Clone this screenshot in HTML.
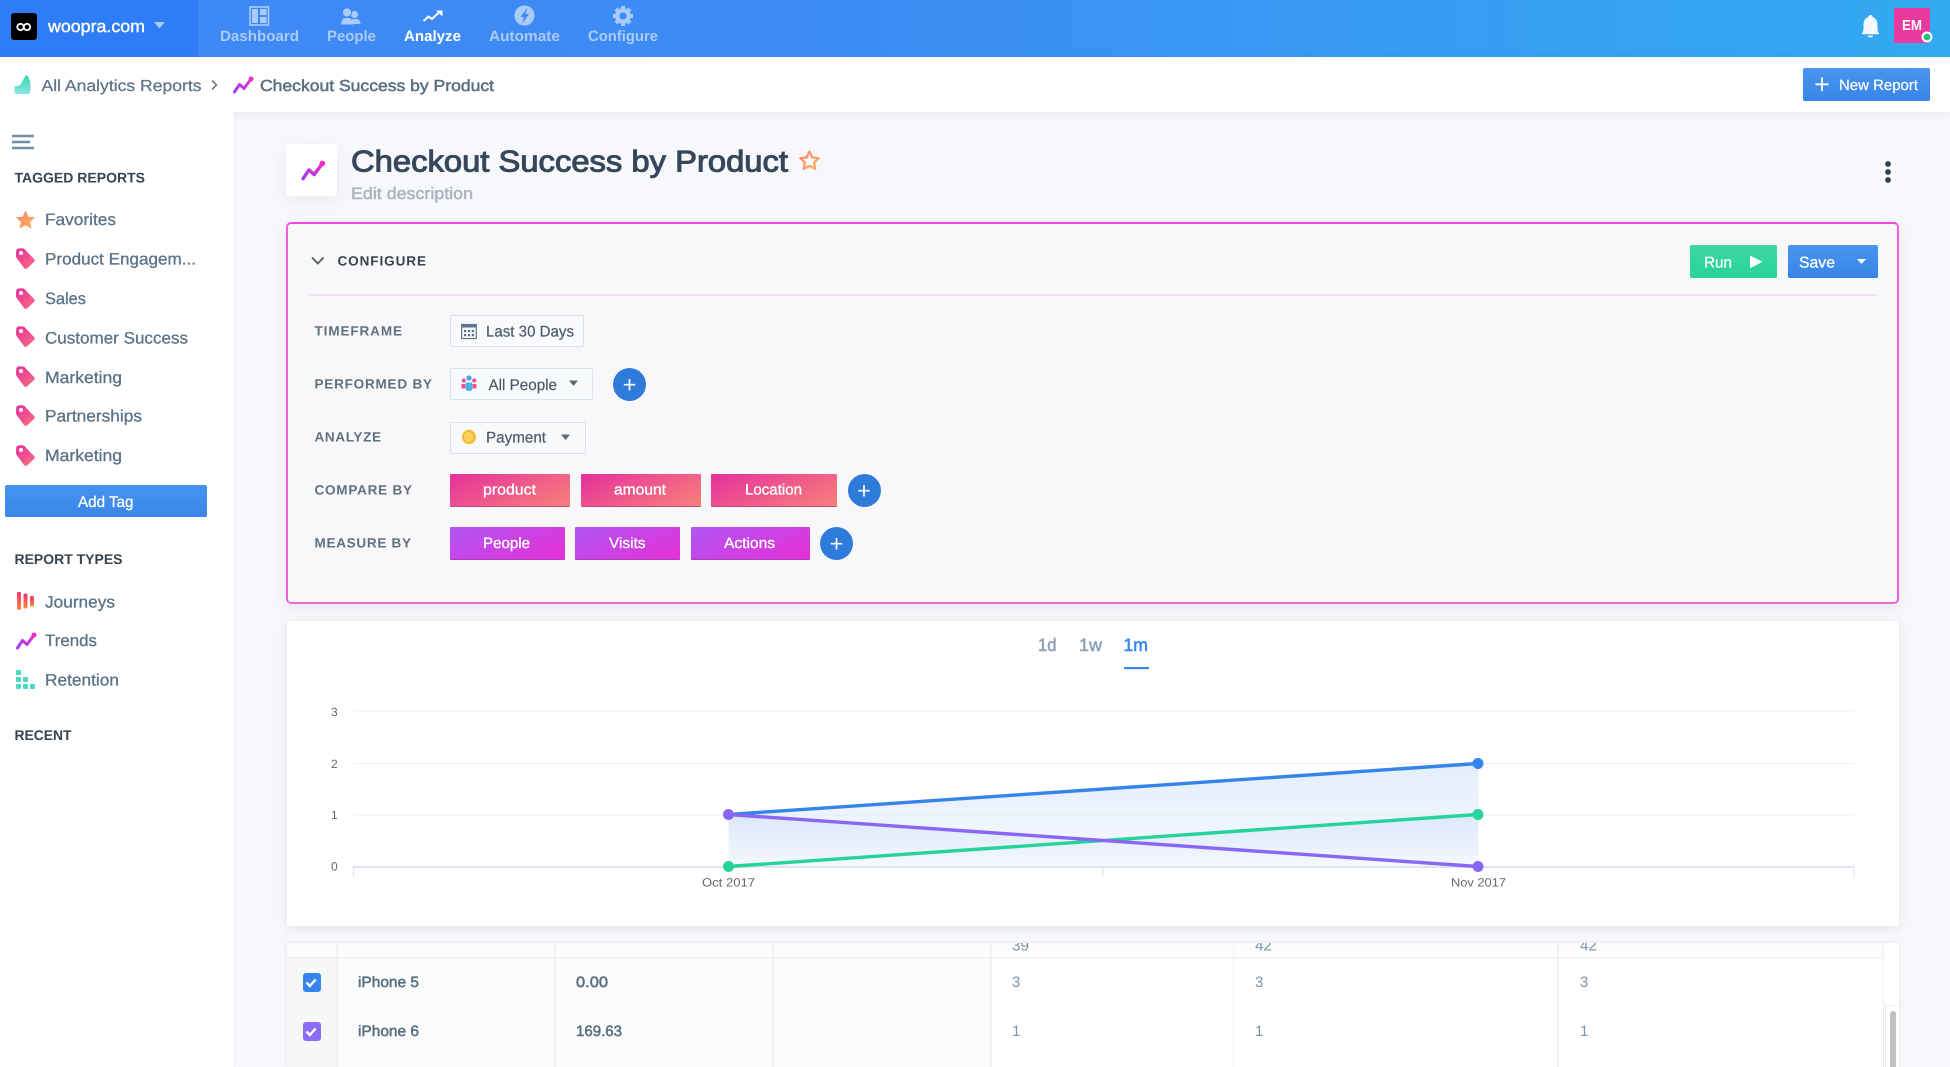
<!DOCTYPE html>
<html lang="en">
<head>
<meta charset="utf-8">
<title>Checkout Success by Product</title>
<style>
html,body{margin:0;padding:0;width:1950px;height:1067px;overflow:hidden;background:#f7f8fb;font-family:"Liberation Sans",sans-serif}
#page{position:absolute;left:0;top:0;width:1950px;height:1067px;overflow:hidden;background:#f7f8fb;filter:blur(.35px)}
.b{position:absolute;box-sizing:border-box}
svg{position:absolute;left:0;top:0}
text{font-family:"Liberation Sans",sans-serif;text-rendering:geometricPrecision}
.sb{stroke:currentColor;stroke-width:.35px}
.nav{font-size:15px;font-weight:700;fill:#a9cbf8}
.side{font-size:16.5px;fill:#5a7288;stroke:#5a7288;stroke-width:.3px}
.head{font-size:14px;font-weight:700;fill:#36434f}
.lab{font-size:13.5px;font-weight:700;fill:#5f7080}
.sel{font-size:15.5px;fill:#4a5a68;stroke:#4a5a68;stroke-width:.2px}
.chip{font-size:15px;fill:#fff;stroke:#fff;stroke-width:.3px}
.num{font-size:15px;fill:#7b93a9}
.row{font-size:15px;fill:#5a6f82;stroke:#5a6f82;stroke-width:.55px}
.axis{font-size:12px;fill:#666}
</style>
</head>
<body>
<div id="page">
<!-- top bar -->
<div class="b" style="left:0;top:0;width:1950px;height:57px;background:linear-gradient(90deg,#3f87f5 0%,#3d8cf5 40%,#32aaf1 100%)"></div>
<div class="b" style="left:0;top:0;width:198px;height:57px;background:#2f7df6"></div>
<div class="b" style="left:11px;top:13px;width:26px;height:27px;background:#000;border-radius:3px"></div>
<div class="b" style="left:1894px;top:8px;width:36px;height:35px;background:#e83a9f;border-radius:2px"></div>
<!-- breadcrumb -->
<div class="b" style="left:0;top:57px;width:1950px;height:55px;background:#fff;box-shadow:0 2px 8px rgba(60,75,100,.09)"></div>
<div class="b" style="left:1803px;top:68px;width:127px;height:33px;border-radius:2px;background:linear-gradient(180deg,#4a95ee,#3785e9)"></div>
<!-- sidebar -->
<div class="b" style="left:0;top:112px;width:234px;height:955px;background:#fff;box-shadow:1px 0 3px rgba(60,75,100,.04)"></div>
<div class="b" style="left:5px;top:485px;width:202px;height:32px;border-radius:2px;background:linear-gradient(180deg,#4693ee,#3a86ea)"></div>
<!-- title icon -->
<div class="b" style="left:286px;top:144px;width:51px;height:52px;background:#fff;border-radius:3px;box-shadow:0 5px 14px rgba(60,75,100,.08)"></div>
<!-- configure card -->
<div class="b" style="left:286px;top:222px;width:1613px;height:382px;background:#f8f8fb;border:2px solid;border-color:#f545de #f05ee0 #e96bd8 #f05ee0;border-radius:5px;box-shadow:0 5px 14px rgba(60,75,100,.08)"></div>
<div class="b" style="left:309px;top:294px;width:1568px;height:1.5px;background:#f8dff5"></div>
<div class="b" style="left:450px;top:315px;width:134px;height:32px;background:#f9fafc;border:1.5px solid #dbe2ea;border-radius:2px"></div>
<div class="b" style="left:450px;top:368px;width:143px;height:32px;background:#f9fafc;border:1.5px solid #dbe2ea;border-radius:2px"></div>
<div class="b" style="left:450px;top:421.5px;width:136px;height:32px;background:#f9fafc;border:1.5px solid #dbe2ea;border-radius:2px"></div>
<div class="b" style="left:613px;top:368px;width:33px;height:33px;border-radius:50%;background:#2f7bdb"></div>
<div class="b" style="left:847.5px;top:474px;width:33px;height:33px;border-radius:50%;background:#2f7bdb"></div>
<div class="b" style="left:820px;top:527px;width:33px;height:33px;border-radius:50%;background:#2f7bdb"></div>
<div class="b" style="left:450px;top:474px;width:120px;height:33px;border-radius:1px;background:linear-gradient(155deg,#e5309c,#f8817a);border-bottom:1.5px solid #c9487f"></div>
<div class="b" style="left:580.5px;top:474px;width:120px;height:33px;border-radius:1px;background:linear-gradient(155deg,#e5309c,#f8817a);border-bottom:1.5px solid #c9487f"></div>
<div class="b" style="left:711px;top:474px;width:126px;height:33px;border-radius:1px;background:linear-gradient(155deg,#e5309c,#f8817a);border-bottom:1.5px solid #c9487f"></div>
<div class="b" style="left:450px;top:527px;width:114.5px;height:33px;border-radius:1px;background:linear-gradient(155deg,#b056f5,#e62fd4);border-bottom:1.5px solid #a83fc2"></div>
<div class="b" style="left:575px;top:527px;width:105px;height:33px;border-radius:1px;background:linear-gradient(155deg,#b056f5,#e62fd4);border-bottom:1.5px solid #a83fc2"></div>
<div class="b" style="left:691px;top:527px;width:118.5px;height:33px;border-radius:1px;background:linear-gradient(155deg,#b056f5,#e62fd4);border-bottom:1.5px solid #a83fc2"></div>
<div class="b" style="left:1690px;top:245px;width:87px;height:33px;border-radius:2px;background:linear-gradient(180deg,#3dd8a0,#26d39b)"></div>
<div class="b" style="left:1788px;top:245px;width:90px;height:33px;border-radius:2px;background:linear-gradient(180deg,#4a95ee,#3785e9)"></div>
<!-- chart card -->
<div class="b" style="left:287px;top:621px;width:1612px;height:305px;background:#fff;border-radius:3px;box-shadow:0 2px 10px rgba(60,75,100,.12)"></div>
<!-- table card -->
<div class="b" style="left:287px;top:943px;width:1612px;height:124px;background:#fff;border-radius:3px 3px 0 0;box-shadow:0 0 4px rgba(60,75,100,.12);overflow:hidden">
  <div class="b" style="left:0;top:0;width:1596px;height:14px;background:#fbfdfc"></div>
  <div class="b" style="left:0;top:14px;width:49px;height:110px;background:#f6f7f9"></div>
  <div class="b" style="left:49px;top:14px;width:654px;height:110px;background:#fbfdfc"></div>
  <div class="b" style="left:0;top:14px;width:1596px;height:1.5px;background:#f2f3f5"></div>
  <div class="b" style="left:49px;top:0;width:1.5px;height:124px;background:#f0f2f4"></div>
  <div class="b" style="left:267px;top:0;width:1.5px;height:124px;background:#f0f2f4"></div>
  <div class="b" style="left:485px;top:0;width:1.5px;height:124px;background:#f0f2f4"></div>
  <div class="b" style="left:703px;top:0;width:1.5px;height:124px;background:#f0f2f4"></div>
  <div class="b" style="left:945.5px;top:0;width:1.5px;height:124px;background:#f0f2f4"></div>
  <div class="b" style="left:1270px;top:0;width:1.5px;height:124px;background:#f0f2f4"></div>
  <div class="b" style="left:1595.5px;top:0;width:1px;height:124px;background:#f0f2f4"></div>
  <div class="b" style="left:1596px;top:62px;width:16px;height:1px;background:#f0f2f4"></div>
  <div class="b" style="left:1598px;top:63px;width:1px;height:61px;background:#e4e4e4"></div>
  <div class="b" style="left:1603px;top:68px;width:6px;height:70px;background:#c1c1c1;border-radius:3px"></div>
  <div class="b" style="left:15.5px;top:30px;width:18px;height:19px;background:#3585ee;border-radius:3px"></div>
  <div class="b" style="left:15.5px;top:79px;width:18px;height:19px;background:#8c6cf5;border-radius:3px"></div>
</div>

<svg width="1950" height="1067" viewBox="0 0 1950 1067" xmlns="http://www.w3.org/2000/svg">
<defs>
  <linearGradient id="gTag" x1="0" y1="0" x2="1" y2="1"><stop offset="0" stop-color="#e6309f"/><stop offset="1" stop-color="#f8707f"/></linearGradient>
  <linearGradient id="gStar" x1="0" y1="0" x2="1" y2="1"><stop offset="0" stop-color="#f8866a"/><stop offset="1" stop-color="#ffb05a"/></linearGradient>
  <linearGradient id="gTrend" x1="0" y1="1" x2="1" y2="0"><stop offset="0" stop-color="#9d3ff0"/><stop offset="1" stop-color="#ee30c8"/></linearGradient>
  <linearGradient id="gJour" x1="0" y1="0" x2="0" y2="1"><stop offset="0" stop-color="#f5306f"/><stop offset="1" stop-color="#fb8a3c"/></linearGradient>
  <linearGradient id="gTeal" x1="0" y1="0" x2="0" y2="1"><stop offset="0" stop-color="#2fd6ae"/><stop offset="1" stop-color="#8fe3e4"/></linearGradient>
  <linearGradient id="gA1" gradientUnits="userSpaceOnUse" x1="0" y1="764" x2="0" y2="867"><stop offset="0" stop-color="#dbe8fb" stop-opacity=".75"/><stop offset="1" stop-color="#dbe8fb" stop-opacity=".25"/></linearGradient>
  <linearGradient id="gA2" gradientUnits="userSpaceOnUse" x1="0" y1="815" x2="0" y2="867"><stop offset="0" stop-color="#cfe0f9" stop-opacity=".55"/><stop offset="1" stop-color="#cfe0f9" stop-opacity="0"/></linearGradient>
  <clipPath id="hdr"><rect x="287" y="943" width="1612" height="14"/></clipPath>
  <symbol id="tag" viewBox="0 0 20 22" width="20" height="22" overflow="visible">
    <path fill="url(#gTag)" d="M2.500.5L6.500.2Q7.500.2 8.500 1L18.500 11.500Q19.500 13 18 14L11 20.500Q9.200 21.500 8 20L1 10.500Q0 9.500 0 8L.2 3Q.5.7 2.500.5Z"/>
    <circle cx="5" cy="5" r="2" fill="#fff"/>
  </symbol>
  <symbol id="trend" viewBox="0 0 20 18" overflow="visible">
    <path fill="none" stroke="url(#gTrend)" stroke-width="3" stroke-linecap="round" stroke-linejoin="round" d="M1.500 16L6.500 8.500L11 12.500L18 3"/>
    <circle cx="18" cy="3" r="2.500" fill="#ee30c8"/>
  </symbol>
</defs>

<!-- top bar -->
<g fill="none" stroke="#fff" stroke-width="1.800">
  <circle cx="20.500" cy="27" r="3.200"/><circle cx="27" cy="27" r="3.200"/>
</g>
<text x="48" y="32" font-size="17" fill="#fff" style="stroke:#fff;stroke-width:.4px" textLength="97" lengthAdjust="spacingAndGlyphs">woopra.com</text>
<path d="M154 22h11l-5.500 6.500z" fill="#a9cbf8"/>

<!-- Dashboard icon -->
<rect x="250" y="7" width="18.500" height="18" fill="none" stroke="#a9cbf8" stroke-width="1.600"/>
<path d="M252 9h6v14h-6zM260 9h6.500v6H260zM260 17h6.500v6H260z" fill="#a9cbf8"/>
<!-- People icon -->
<circle cx="354.500" cy="14.500" r="3.600" fill="#a9cbf8"/>
<path d="M352 19h5q3.500 1 3.500 5h-8z" fill="#a9cbf8"/>
<circle cx="347" cy="12.500" r="4.500" fill="#a9cbf8" stroke="#3f87f5" stroke-width=".8"/>
<path d="M341 24.500q0-5.500 4-6.500h4q4 1 4.500 6.500z" fill="#a9cbf8"/>
<!-- Analyze icon -->
<path d="M423.500 21l5-4.500l3.500 2.500l8-7.500" fill="none" stroke="#fff" stroke-width="2"/>
<path d="M436 10.500h6.500v6z" fill="#fff"/>
<!-- Automate icon -->
<circle cx="524.500" cy="15.500" r="10" fill="#a9cbf8"/>
<path d="M527.500 7.500L520.500 17h3.500l-2 7l7-10h-3.500z" fill="#3f8af5"/>
<!-- Configure gear -->
<g transform="translate(623 16)">
  <circle r="6" fill="none" stroke="#a9cbf8" stroke-width="4"/>
  <g fill="#a9cbf8"><rect x="-2" y="-10" width="4" height="20"/><rect x="-2" y="-10" width="4" height="20" transform="rotate(45)"/><rect x="-2" y="-10" width="4" height="20" transform="rotate(90)"/><rect x="-2" y="-10" width="4" height="20" transform="rotate(135)"/></g>
  <circle r="3.600" fill="#3f8bf5"/>
</g>
<text x="220" y="41" class="nav" textLength="79" lengthAdjust="spacingAndGlyphs">Dashboard</text>
<text x="327" y="41" class="nav" textLength="49" lengthAdjust="spacingAndGlyphs">People</text>
<text x="404" y="41" class="nav" style="fill:#fff" textLength="57" lengthAdjust="spacingAndGlyphs">Analyze</text>
<text x="489" y="41" class="nav" textLength="71" lengthAdjust="spacingAndGlyphs">Automate</text>
<text x="588" y="41" class="nav" textLength="70" lengthAdjust="spacingAndGlyphs">Configure</text>

<!-- Bell / avatar -->
<path d="M1870.500 15q2 0 2.200 2q4.800 1.500 4.800 8v4.500q0 2 1.500 3.500v1.300h-17v-1.300q1.500-1.500 1.500-3.500V25q0-6.500 4.800-8q.2-2 2.200-2z" fill="#f4f8fd"/>
<rect x="1868" y="35.500" width="5" height="1.800" rx=".9" fill="#f4f8fd"/>
<text x="1902" y="30" font-size="14.500" font-weight="700" fill="#fff" textLength="20" lengthAdjust="spacingAndGlyphs">EM</text>
<circle cx="1927" cy="37" r="5.500" fill="#fff"/><circle cx="1927" cy="37" r="3.400" fill="#2bc17c"/>

<!-- Breadcrumb -->
<path d="M14.500 88q0-2 2-2q3 0 5-3q2-4 4-7q1-1.500 2.500 0q2.500 5 2.500 11v4q0 3-3 3h-10q-3 0-3-3z" fill="url(#gTeal)"/>
<text x="41.500" y="91" font-size="16" fill="#5f7488" style="stroke:#5f7488;stroke-width:.25px" textLength="160" lengthAdjust="spacingAndGlyphs">All Analytics Reports</text>
<path d="M212 80.500l4.500 4.500l-4.500 4.500" fill="none" stroke="#5f7488" stroke-width="1.500"/>
<use href="#trend" x="233" y="76" width="20" height="18"/>
<text x="260" y="91" font-size="16" fill="#5a6f82" style="stroke:#5a6f82;stroke-width:.5px" textLength="234" lengthAdjust="spacingAndGlyphs">Checkout Success by Product</text>
<path d="M1822 77.500v13.500M1815.500 84.300h13" stroke="#fff" stroke-width="1.800"/>
<text x="1839" y="90" font-size="15" fill="#fff" style="stroke:#fff;stroke-width:.2px" textLength="79" lengthAdjust="spacingAndGlyphs">New Report</text>

<!-- Sidebar -->
<path d="M12 136h22M12 142h18M12 148h22" stroke="#6f8ea8" stroke-width="2.400"/>
<text x="14.500" y="182.500" class="head" textLength="130.500" lengthAdjust="spacingAndGlyphs">TAGGED REPORTS</text>
<path fill="url(#gStar)" d="M25.500 210.500l2.900 6.200l6.700.7l-5 4.500l1.500 6.800l-6.100-3.500l-6.100 3.500l1.500-6.800l-5-4.500l6.700-.7z"/>
<use href="#tag" x="16" y="248" width="20" height="22"/>
<use href="#tag" x="16" y="288" width="20" height="22"/>
<use href="#tag" x="16" y="326" width="20" height="22"/>
<use href="#tag" x="16" y="366" width="20" height="22"/>
<use href="#tag" x="16" y="405" width="20" height="22"/>
<use href="#tag" x="16" y="445" width="20" height="22"/>
<text x="45" y="225" class="side" textLength="71" lengthAdjust="spacingAndGlyphs">Favorites</text>
<text x="45" y="264.500" class="side" textLength="151" lengthAdjust="spacingAndGlyphs">Product Engagem...</text>
<text x="45" y="304" class="side" textLength="41" lengthAdjust="spacingAndGlyphs">Sales</text>
<text x="45" y="343.500" class="side" textLength="143" lengthAdjust="spacingAndGlyphs">Customer Success</text>
<text x="45" y="383" class="side" textLength="77" lengthAdjust="spacingAndGlyphs">Marketing</text>
<text x="45" y="421.500" class="side" textLength="97" lengthAdjust="spacingAndGlyphs">Partnerships</text>
<text x="45" y="461" class="side" textLength="77" lengthAdjust="spacingAndGlyphs">Marketing</text>
<text x="78" y="507" font-size="15.500" fill="#fff" style="stroke:#fff;stroke-width:.25px" textLength="55.500" lengthAdjust="spacingAndGlyphs">Add Tag</text>
<text x="14.500" y="564" class="head" textLength="108" lengthAdjust="spacingAndGlyphs">REPORT TYPES</text>
<g fill="url(#gJour)">
  <rect x="17" y="592" width="4" height="18" rx="1.500"/>
  <rect x="23.500" y="593.500" width="4" height="15" rx="1.500"/>
  <rect x="30" y="596" width="4" height="10.500" rx="1.500"/>
</g>
<text x="45" y="607.500" class="side" textLength="70" lengthAdjust="spacingAndGlyphs">Journeys</text>
<use href="#trend" x="16" y="632" width="20" height="18"/>
<text x="45" y="646" class="side" textLength="52" lengthAdjust="spacingAndGlyphs">Trends</text>
<g fill="#4cd8c2">
  <rect x="16" y="670" width="5" height="5" rx="1"/>
  <rect x="16" y="677" width="5" height="5" rx="1"/><rect x="23" y="677" width="5" height="5" rx="1"/>
  <rect x="16" y="684" width="5" height="5" rx="1"/><rect x="23" y="684" width="5" height="5" rx="1"/><rect x="30" y="684" width="5" height="5" rx="1"/>
</g>
<text x="45" y="685.500" class="side" textLength="74" lengthAdjust="spacingAndGlyphs">Retention</text>
<text x="14.500" y="740" class="head" textLength="57" lengthAdjust="spacingAndGlyphs">RECENT</text>

<!-- Title -->
<use href="#trend" x="300" y="160" width="26" height="21"/>
<text x="351" y="171.500" font-size="30" fill="#36475a" style="stroke:#36475a;stroke-width:1px" textLength="437" lengthAdjust="spacingAndGlyphs">Checkout Success by Product</text>
<path fill="none" stroke="url(#gStar)" stroke-width="2.200" stroke-linejoin="round" d="M809.500 151.500l2.800 6l6.500.7l-4.800 4.400l1.300 6.400l-5.800-3.200l-5.800 3.200l1.300-6.400l-4.800-4.400l6.500-.7z"/>
<text x="351" y="199" font-size="16.500" fill="#aab4bf" style="stroke:#aab4bf;stroke-width:.5px" textLength="122" lengthAdjust="spacingAndGlyphs">Edit description</text>
<g fill="#2f3f50"><circle cx="1888" cy="164" r="2.900"/><circle cx="1888" cy="172" r="2.900"/><circle cx="1888" cy="180" r="2.900"/></g>

<!-- Configure -->
<path d="M312 257.500l5.800 6l5.800-6" fill="none" stroke="#4a5a68" stroke-width="1.700"/>
<text x="337.500" y="265.500" font-size="13.500" font-weight="700" fill="#36434f" textLength="88.500" lengthAdjust="spacing">CONFIGURE</text>
<text x="1704" y="267.500" font-size="15.500" fill="#fff" style="stroke:#fff;stroke-width:.25px" textLength="28" lengthAdjust="spacingAndGlyphs">Run</text>
<path d="M1750 255.500l12.500 6.300l-12.500 6.500z" fill="#fff"/>
<text x="1799" y="267.500" font-size="15.500" fill="#fff" style="stroke:#fff;stroke-width:.25px" textLength="36" lengthAdjust="spacingAndGlyphs">Save</text>
<path d="M1857 259h9l-4.500 5z" fill="#fff"/>

<text x="314.500" y="335.500" class="lab" textLength="87.500" lengthAdjust="spacing">TIMEFRAME</text>
<text x="314.500" y="388.500" class="lab" textLength="117.500" lengthAdjust="spacing">PERFORMED BY</text>
<text x="314.500" y="441.500" class="lab" textLength="66.500" lengthAdjust="spacing">ANALYZE</text>
<text x="314.500" y="494.500" class="lab" textLength="97.500" lengthAdjust="spacing">COMPARE BY</text>
<text x="314.500" y="547.500" class="lab" textLength="96.500" lengthAdjust="spacing">MEASURE BY</text>

<!-- Calendar -->
<rect x="461.700" y="324.500" width="14.600" height="14" fill="none" stroke="#60758a" stroke-width="1.200"/>
<rect x="461.700" y="324.500" width="14.600" height="3" fill="#60758a"/>
<g fill="#5a6f88"><rect x="464" y="330" width="2.200" height="2.200"/><rect x="467.900" y="330" width="2.200" height="2.200"/><rect x="471.800" y="330" width="2.200" height="2.200"/><rect x="464" y="334" width="2.200" height="2.200"/><rect x="467.900" y="334" width="2.200" height="2.200"/><rect x="471.800" y="334" width="2.200" height="2.200"/></g>
<text x="486" y="336.500" class="sel" textLength="88" lengthAdjust="spacingAndGlyphs">Last 30 Days</text>
<!-- People colored -->
<circle cx="469" cy="378" r="2.600" fill="#4aa3e8"/>
<circle cx="463.800" cy="380.500" r="2.100" fill="#ee4f9d"/><circle cx="474.200" cy="380.500" r="2.100" fill="#ee4f9d"/>
<path d="M461.500 384h4v4.500h-4zM472.500 384h4v4.500h-4z" fill="#ee4f9d"/>
<path d="M465.800 382.500h6.400v7.500q-3.200 2-6.400 0z" fill="#42b6dd"/>
<text x="488.500" y="390" class="sel" textLength="68.500" lengthAdjust="spacingAndGlyphs">All People</text>
<path d="M569 380.500h9l-4.500 5.500z" fill="#5a6a78"/>
<path d="M629.500 379v11.500M623.800 384.700h11.400" stroke="#fff" stroke-width="1.700"/>
<!-- Coin -->
<ellipse cx="469" cy="437" rx="7" ry="7.300" fill="#f6b83a"/>
<ellipse cx="468.500" cy="437" rx="4.500" ry="5" fill="#fbd35c"/>
<text x="486" y="442.500" class="sel" textLength="60" lengthAdjust="spacingAndGlyphs">Payment</text>
<path d="M561 434.500h9l-4.500 5.500z" fill="#5a6a78"/>

<text x="483" y="494.500" class="chip" textLength="53" lengthAdjust="spacingAndGlyphs">product</text>
<text x="614" y="494.500" class="chip" textLength="52" lengthAdjust="spacingAndGlyphs">amount</text>
<text x="745" y="494.500" class="chip" textLength="57" lengthAdjust="spacingAndGlyphs">Location</text>
<path d="M864 485v11.500M858.300 490.700h11.400" stroke="#fff" stroke-width="1.700"/>
<text x="483" y="548" class="chip" textLength="47" lengthAdjust="spacingAndGlyphs">People</text>
<text x="609" y="548" class="chip" textLength="36.500" lengthAdjust="spacingAndGlyphs">Visits</text>
<text x="724" y="548" class="chip" textLength="51" lengthAdjust="spacingAndGlyphs">Actions</text>
<path d="M836.500 538v11.500M830.800 543.700h11.400" stroke="#fff" stroke-width="1.700"/>

<!-- Chart -->
<text x="1038" y="651" font-size="18" fill="#8ea3b5" style="stroke:#8ea3b5;stroke-width:.6px" textLength="18.500" lengthAdjust="spacingAndGlyphs">1d</text>
<text x="1079" y="651" font-size="18" fill="#8ea3b5" style="stroke:#8ea3b5;stroke-width:.6px" textLength="23" lengthAdjust="spacingAndGlyphs">1w</text>
<text x="1123.500" y="651" font-size="18" fill="#3a87ee" style="stroke:#3a87ee;stroke-width:.6px" textLength="24.500" lengthAdjust="spacingAndGlyphs">1m</text>
<rect x="1124" y="667" width="25" height="2.200" fill="#3a87ee"/>
<g stroke="#eef2f7" stroke-width="1.200">
  <path d="M353 711h1501.500M353 763.500h1501.500M353 815h1501.500"/>
</g>
<path d="M728.500 814.500L1478.500 763.500V866.500H728.500Z" fill="url(#gA1)"/>
<path d="M728.500 814.500L1103.500 840.500L728.500 866.500Z" fill="url(#gA2)"/>
<path d="M728.500 866.500L1478.500 814.500V866.500Z" fill="url(#gA2)"/>
<path d="M353 867h1501.500" stroke="#e0e6f0" stroke-width="2"/>
<path d="M353.500 867v10M1103 867v10M1854 867v10" stroke="#dfe5ee" stroke-width="1.200"/>
<path d="M728.500 814.500L1478 763.500" stroke="#3584ea" stroke-width="3.400"/>
<path d="M728.500 866.500L1478 814.500" stroke="#25d39b" stroke-width="3.400"/>
<path d="M728.500 814.500L1478 866.500" stroke="#8a66f5" stroke-width="3.400"/>
<circle cx="1478" cy="763.500" r="5.500" fill="#3584ea"/>
<circle cx="1478" cy="814.500" r="5.500" fill="#25d39b"/>
<circle cx="1478" cy="866.500" r="5.500" fill="#8a66f5"/>
<circle cx="728.500" cy="814.500" r="5.500" fill="#8a66f5"/>
<circle cx="728.500" cy="866.500" r="5.500" fill="#25d39b"/>
<text x="331" y="716" class="axis">3</text>
<text x="331" y="768" class="axis">2</text>
<text x="331" y="819" class="axis">1</text>
<text x="331" y="870.500" class="axis">0</text>
<text x="702" y="886.500" class="axis" textLength="53" lengthAdjust="spacingAndGlyphs">Oct 2017</text>
<text x="1451" y="886.500" class="axis" textLength="55" lengthAdjust="spacingAndGlyphs">Nov 2017</text>

<!-- Table -->
<g clip-path="url(#hdr)">
  <text x="1012" y="950.500" class="num" textLength="17" lengthAdjust="spacingAndGlyphs">39</text>
  <text x="1255" y="950.500" class="num" textLength="17" lengthAdjust="spacingAndGlyphs">42</text>
  <text x="1580" y="950.500" class="num" textLength="17" lengthAdjust="spacingAndGlyphs">42</text>
</g>
<path d="M306.500 982.500l3.300 3.500l5.800-6.500M306.500 1031.500l3.300 3.500l5.800-6.500" fill="none" stroke="#fff" stroke-width="2.400"/>
<text x="358" y="987" class="row" textLength="61" lengthAdjust="spacingAndGlyphs">iPhone 5</text>
<text x="358" y="1036" class="row" textLength="61" lengthAdjust="spacingAndGlyphs">iPhone 6</text>
<text x="576" y="987" class="row" textLength="32" lengthAdjust="spacingAndGlyphs">0.00</text>
<text x="576" y="1036" class="row" textLength="46" lengthAdjust="spacingAndGlyphs">169.63</text>
<text x="1012" y="987" class="num">3</text><text x="1255" y="987" class="num">3</text><text x="1580" y="987" class="num">3</text>
<text x="1012" y="1036" class="num">1</text><text x="1255" y="1036" class="num">1</text><text x="1580" y="1036" class="num">1</text>
</svg>
</div>
</body>
</html>
